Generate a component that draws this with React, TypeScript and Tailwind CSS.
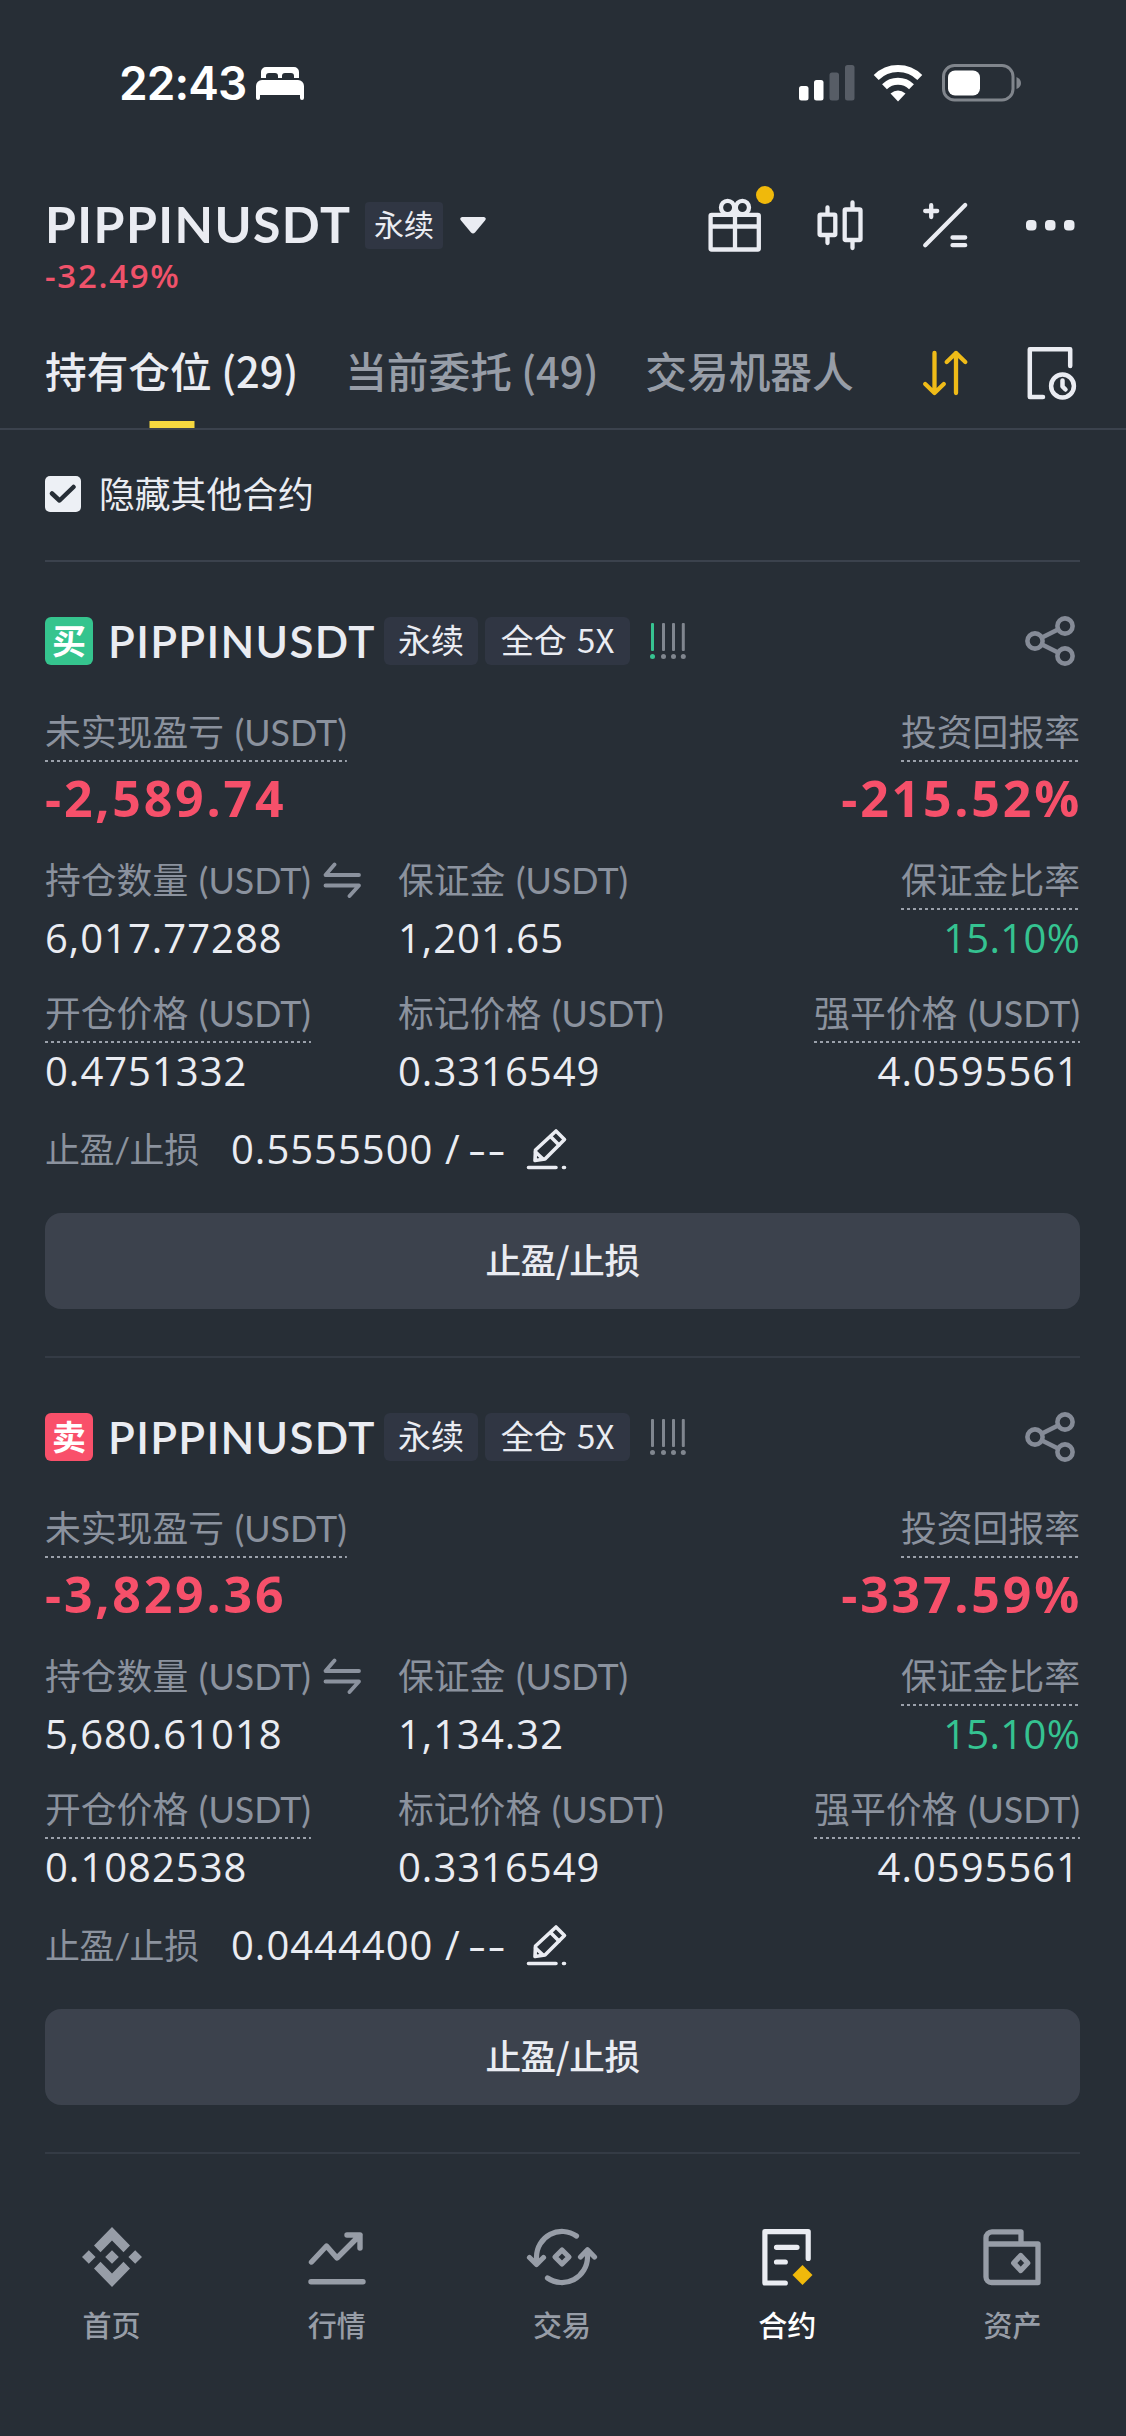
import React, { useState } from "react";

type Position = {
  side: "buy" | "sell";
  symbol: string;
  leverage: string;
  risk: number;
  pnl: string;
  roi: string;
  size: string;
  margin: string;
  marginRatio: string;
  entryPrice: string;
  markPrice: string;
  liqPrice: string;
  tpsl: string;
};

const positions: Position[] = [
  {
    side: "buy",
    symbol: "PIPPINUSDT",
    leverage: "5X",
    risk: 1,
    pnl: "-2,589.74",
    roi: "-215.52%",
    size: "6,017.77288",
    margin: "1,201.65",
    marginRatio: "15.10%",
    entryPrice: "0.4751332",
    markPrice: "0.3316549",
    liqPrice: "4.0595561",
    tpsl: "0.5555500",
  },
  {
    side: "sell",
    symbol: "PIPPINUSDT",
    leverage: "5X",
    risk: 0,
    pnl: "-3,829.36",
    roi: "-337.59%",
    size: "5,680.61018",
    margin: "1,134.32",
    marginRatio: "15.10%",
    entryPrice: "0.1082538",
    markPrice: "0.3316549",
    liqPrice: "4.0595561",
    tpsl: "0.0444400",
  },
];

const StatusBar = () => (
  <div className="flex h-[166px] items-center justify-between pl-[119px] pr-[104px]">
    <div className="flex items-center gap-[10px] text-white">
      <span className="font-['Inter',sans-serif] text-[46px] font-semibold leading-none tracking-[-0.9px]">
        22:43
      </span>
      <svg width="48" height="33" viewBox="0 0 48 33" fill="currentColor">
        <path d="M5 11V5a5 5 0 0 1 5-5h28a5 5 0 0 1 5 5v6h-5V9a3 3 0 0 0-3-3h-6a3 3 0 0 0-3 3v2h-4V9a3 3 0 0 0-3-3h-6a3 3 0 0 0-3 3v2z" />
        <path d="M0 19a6 6 0 0 1 6-6h36a6 6 0 0 1 6 6v12a2 2 0 0 1-4 0v-3H4v3a2 2 0 0 1-4 0z" />
      </svg>
    </div>
    <div className="flex items-center gap-[19px]">
      <svg className="-mr-[1px]" width="56" height="36" viewBox="0 0 56 36">
        <rect x="0" y="21" width="9.5" height="14.5" rx="2.5" fill="#fff" />
        <rect x="15" y="15" width="9.5" height="20.5" rx="2.5" fill="#fff" />
        <rect x="30.5" y="7.5" width="9.5" height="28" rx="2.5" fill="#575d66" />
        <rect x="46" y="0" width="9.5" height="35.5" rx="2.5" fill="#575d66" />
      </svg>
      <svg width="50" height="37" viewBox="0 0 50 37" fill="none">
        <path d="M3.2 12.5A31 31 0 0 1 46.8 12.5" stroke="#fff" strokeWidth="7" />
        <path d="M11.5 21.8A19.5 19.5 0 0 1 38.5 21.8" stroke="#fff" strokeWidth="7" />
        <path d="M25 36.5L17.5 28.5Q25 22.5 32.5 28.5Z" fill="#fff" />
      </svg>
      <svg width="80" height="38" viewBox="0 0 80 38" fill="none">
        <rect x="1.5" y="1.5" width="69.5" height="34.5" rx="11" stroke="#80858c" strokeWidth="3" />
        <rect x="6" y="6.5" width="32" height="25" rx="7" fill="#fff" />
        <path d="M74.5 13Q79 15 79 19T74.5 25Z" fill="#80858c" />
      </svg>
    </div>
  </div>
);

const Header = () => (
  <div className="mt-[29px] flex items-start justify-between pl-[45px] pr-[49px]">
    <div>
      <div className="flex h-[60px] items-center">
        <span className="w-[320px] pb-[2px] font-['Lato','Noto_Sans_CJK_SC',sans-serif] text-[50px] font-bold leading-[58px] tracking-[1.4px]">
          PIPPINUSDT
        </span>
        <span className="flex h-[47px] w-[78px] items-center justify-center rounded-[4px] bg-[#303643] pb-[4px] font-['Noto_Sans_CJK_SC',sans-serif] text-[30px] leading-none">
          永续
        </span>
        <svg className="ml-[17px]" width="26" height="17" viewBox="0 0 26 17" fill="currentColor">
          <path d="M2 0H24Q27 1 25 3.5L15 15.5Q13 17.5 11 15.5L1 3.5Q-1 1 2 0Z" />
        </svg>
      </div>
      <div className="h-[42px] font-['Open_Sans',sans-serif] text-[33px] font-semibold leading-[42px] tracking-[1.7px] text-[#f0526a]">
        -32.49%
      </div>
    </div>
    <div className="flex h-[60px] items-center gap-[51px]">
      <div className="relative">
        <svg width="54" height="54" viewBox="0 0 54 54" fill="none" stroke="currentColor" strokeWidth="4.3">
          <rect x="2.6" y="16.8" width="48.2" height="34.7" rx="1" />
          <path d="M2.6 28.5H50.8M27 9V51" />
          <circle cx="19.6" cy="9.5" r="6.6" />
          <circle cx="34.4" cy="9.5" r="6.6" />
        </svg>
        <span className="absolute -right-[12px] -top-[12px] h-[18px] w-[18px] rounded-full bg-[#f0b90b]" />
      </div>
      <svg width="54" height="54" viewBox="0 0 54 54" fill="none" stroke="currentColor" strokeWidth="4.3" strokeLinecap="round">
        <rect x="6.6" y="16.7" width="15.7" height="20.3" rx="1" />
        <path d="M14.5 9.5V15M14.5 38V45M39.5 4.5V10M39.5 43V50" />
        <rect x="31.7" y="11.5" width="15.8" height="30.5" rx="1" />
      </svg>
      <svg width="54" height="54" viewBox="0 0 54 54" fill="none" stroke="currentColor" strokeWidth="4.3" strokeLinecap="round">
        <path d="M47.2 7L7.2 47.2M13.2 7.2V19M7.2 13H19.2M34.5 39.5H47.2M34.5 47.2H47.2" />
      </svg>
      <svg width="54" height="54" viewBox="0 0 54 54" fill="currentColor">
        <rect x="3" y="22" width="10.5" height="10.5" rx="4" />
        <rect x="22" y="22" width="10.5" height="10.5" rx="4" />
        <rect x="41" y="22" width="10.5" height="10.5" rx="4" />
      </svg>
    </div>
  </div>
);

const tabs = ["持有仓位 (29)", "当前委托 (49)", "交易机器人"];

const Tabs = () => {
  const [active, setActive] = useState(0);

  return (
    <div className="mt-[20px] flex h-[113px] items-center justify-between border-b-2 border-[#3b424d] pl-[45px] pr-[49px]">
      <div className="flex h-full gap-[46.8px]">
        {tabs.map((tab, index) => (
          <button
            key={tab}
            onClick={() => setActive(index)}
            className={`relative h-full whitespace-nowrap pb-[4px] font-['Noto_Sans_CJK_SC',sans-serif] text-[41.7px] font-medium ${
              active === index ? "text-[#eaecf2]" : "text-[#979da7]"
            }`}
          >
            {tab}
            {active === index && (
              <span className="absolute bottom-0 left-1/2 h-[7px] w-[45px] -translate-x-1/2 bg-[#f6d83f]" />
            )}
          </button>
        ))}
      </div>
      <div className="flex items-center gap-[51px]">
        <svg width="54" height="54" viewBox="0 0 54 54" fill="none" stroke="#efbb18" strokeWidth="4.3" strokeLinecap="round" strokeLinejoin="round">
          <path d="M16.5 7V47M7.2 38L16.5 47L25.8 38" />
          <path d="M38 47V7M28.7 16L38 7L47.3 16" />
        </svg>
        <svg width="54" height="54" viewBox="0 0 54 54" fill="none" stroke="currentColor" strokeWidth="4.5" strokeLinecap="round" strokeLinejoin="round">
          <path d="M47.2 20V3.3H6.8V51H20" />
          <circle cx="39.5" cy="40" r="11.4" />
          <path d="M39.5 34.5V40.5L42.5 43.5" />
        </svg>
      </div>
    </div>
  );
};

type FieldProps = {
  label: string;
  value: string;
  dotted?: boolean;
  right?: boolean;
  swap?: boolean;
  valueClass?: string;
};

const Field = ({ label, value, dotted, right, swap, valueClass }: FieldProps) => (
  <div className={`flex flex-col ${right ? "items-end" : "items-start"}`}>
    <div className="flex items-center">
      <div
        className={`h-[56px] whitespace-nowrap font-['Lato','Noto_Sans_CJK_SC',sans-serif] text-[35.8px] leading-[53px] text-[#8b929e] [word-spacing:1.5px] ${
          dotted
            ? "bg-[repeating-linear-gradient(90deg,#9ba1ab_0px,#9ba1ab_3px,transparent_3px,transparent_6px)] bg-[length:100%_2px] bg-bottom bg-no-repeat"
            : ""
        }`}
      >
        {label}
      </div>
      {swap && (
        <svg className="-mt-1 ml-[12px] text-[#8b929e]" width="38" height="36" viewBox="0 0 38 36" fill="none" stroke="currentColor" strokeWidth="3.8" strokeLinecap="round" strokeLinejoin="round">
          <path d="M36 13H2.5L11.5 2.5M2.5 23.5H36L26.5 34" />
        </svg>
      )}
    </div>
    <div className={valueClass || "h-[58px] font-['Open_Sans',sans-serif] text-[40px] leading-[56px] tracking-[1px]"}>
      {value}
    </div>
  </div>
);

const PositionCard = ({ position }: { position: Position }) => {
  const pnlClass =
    "-mr-[2px] h-[72px] font-['Open_Sans',sans-serif] text-[50px] font-bold leading-[72px] tracking-[2.8px] text-[#f6506a]";

  return (
    <div className="border-b-2 border-[#343b45] pb-[47px] pt-[55px]">
      <div className="flex h-[48px] items-center">
        <span
          className={`flex h-[48px] w-[48px] items-center justify-center rounded-[6px] pb-[2px] font-['Noto_Sans_CJK_SC',sans-serif] text-[34px] font-bold leading-none text-white ${
            position.side === "buy" ? "bg-[#35c48e]" : "bg-[#f9506a]"
          }`}
        >
          {position.side === "buy" ? "买" : "卖"}
        </span>
        <span className="ml-[15px] w-[276px] font-['Lato',sans-serif] text-[44px] font-semibold leading-[48px] tracking-[1.3px]">
          {position.symbol}
        </span>
        <span className="flex h-[48px] w-[94px] items-center justify-center rounded-[6px] bg-[#303643] pb-[3px] font-['Noto_Sans_CJK_SC',sans-serif] text-[33px] leading-none">
          永续
        </span>
        <span className="ml-[7px] flex h-[48px] w-[145px] items-center justify-center rounded-[6px] bg-[#303643] pb-[3px] font-['Noto_Sans_CJK_SC',sans-serif] text-[33px] leading-none [word-spacing:3px]">
          全仓 {position.leverage}
        </span>
        <svg className="ml-[20px]" width="36" height="38" viewBox="0 0 36 38">
          {[2.5, 13.5, 23.5, 33.3].map((x, index) => (
            <g key={x} fill={index < position.risk ? "#37c391" : "#80868f"}>
              <rect x={x - 1.5} y="1" width="3" height="28" rx="1" />
              <circle cx={x} cy="34.5" r="2.5" />
            </g>
          ))}
        </svg>
        <svg className="ml-auto text-[#858b97]" width="56" height="52" viewBox="0 0 56 52" fill="none" stroke="currentColor" strokeWidth="4.6">
          <circle cx="41" cy="11" r="7.6" />
          <circle cx="11" cy="26" r="7.6" />
          <circle cx="41" cy="41" r="7.6" />
          <path d="M18 22.5L34 14.5M18 29.5L34 37.5" />
        </svg>
      </div>

      <div className="mt-[41px] flex justify-between">
        <Field label="未实现盈亏 (USDT)" value={position.pnl} dotted valueClass={pnlClass} />
        <Field label="投资回报率" value={position.roi} dotted right valueClass={pnlClass} />
      </div>

      <div className="mt-[20px] grid grid-cols-[353px_1fr_auto] gap-y-[19px]">
        <Field label="持仓数量 (USDT)" value={position.size} swap />
        <Field label="保证金 (USDT)" value={position.margin} />
        <Field
          label="保证金比率"
          value={position.marginRatio}
          dotted
          right
          valueClass="h-[58px] font-['Open_Sans',sans-serif] text-[40px] leading-[56px] tracking-[0.3px] text-[#35c391]"
        />
        <Field label="开仓价格 (USDT)" value={position.entryPrice} dotted />
        <Field label="标记价格 (USDT)" value={position.markPrice} />
        <Field label="强平价格 (USDT)" value={position.liqPrice} dotted right />
      </div>

      <div className="mt-[24px] flex h-[48px] items-center">
        <span className="w-[186px] font-['Lato','Noto_Sans_CJK_SC',sans-serif] text-[35px] leading-[48px] tracking-[-0.4px] text-[#8b929e]">
          止盈/止损
        </span>
        <span className="whitespace-pre font-['Open_Sans',sans-serif] text-[40px] leading-[48px] tracking-[1px]">
          {position.tpsl} /{" "}
          <span className="-ml-[4px] inline-block origin-left scale-x-[1.4]">--</span>
        </span>
        <svg className="ml-[30px]" width="42" height="42" viewBox="0 0 42 42" fill="none" stroke="currentColor" strokeWidth="3.6" strokeLinecap="round" strokeLinejoin="round">
          <path d="M9 32.5L9.5 22L30 3L38.5 11.5L19 31Z" />
          <path d="M24.5 8.5L33 17M9.5 24L17 31M2.5 39.5H30M37.5 39.5H38.5" />
        </svg>
      </div>

      <button className="mt-[40px] h-[96px] w-full rounded-[16px] bg-[#3c424d] pb-[4px] font-['Noto_Sans_CJK_SC',sans-serif] text-[35.6px] font-medium tracking-[-0.4px]">
        止盈/止损
      </button>
    </div>
  );
};

const navItems = [
  {
    label: "首页",
    icon: (
      <svg width="60" height="60" viewBox="0 0 60 60" fill="currentColor">
        <path d="M30 0L48 18.5L41.5 25.2L30 13.5L18.5 25.2L12 18.5ZM30 60L48 41.5L41.5 34.8L30 46.5L18.5 34.8L12 41.5Z" />
        <path d="M30 23.2L36.8 30L30 36.8L23.2 30ZM6.8 23.2L13.6 30L6.8 36.8L0 30ZM53.2 23.2L60 30L53.2 36.8L46.4 30Z" />
      </svg>
    ),
  },
  {
    label: "行情",
    icon: (
      <svg width="60" height="60" viewBox="0 0 60 60" fill="none" stroke="currentColor" strokeWidth="5.4" strokeLinecap="round" strokeLinejoin="round">
        <path d="M4.5 35L19.5 19L30 31L53 8M40 8H53V21M4 54.8H56" />
      </svg>
    ),
  },
  {
    label: "交易",
    icon: (
      <svg width="72" height="60" viewBox="0 0 72 60" fill="none" stroke="currentColor" strokeWidth="5.2" strokeLinecap="round" strokeLinejoin="round">
        <path d="M10.5 37V30A25.5 25.5 0 0 1 50.5 9M3.5 30.5L10.5 37.5L17.5 30.5" />
        <path d="M61.5 23V30A25.5 25.5 0 0 1 21.5 51M54.5 30L61.5 22.8L68.5 30" />
        <path d="M36 23L43 30L36 37L29 30Z" />
      </svg>
    ),
  },
  {
    label: "合约",
    active: true,
    icon: (
      <svg width="60" height="60" viewBox="0 0 60 60" fill="none" stroke="#eaecf2" strokeWidth="5.2" strokeLinecap="round" strokeLinejoin="round">
        <path d="M51.2 31.5V4.6H7.9V56H28.3M19.5 20.3H40M19.5 35H28.3" />
        <path d="M45.5 38L55.5 48L45.5 58L35.5 48Z" fill="#f0b90b" stroke="none" />
      </svg>
    ),
  },
  {
    label: "资产",
    icon: (
      <svg width="60" height="60" viewBox="0 0 60 60" fill="none" stroke="currentColor" strokeWidth="5.3" strokeLinejoin="round">
        <path d="M39 17V4.8H10A6 6 0 0 0 4 10.8V50A5.5 5.5 0 0 0 9.5 55.500H56V17H4" />
        <path d="M38.7 28.5L45.7 36L38.7 43.5L31.7 36Z" />
      </svg>
    ),
  },
];

const BottomNav = () => (
  <div className="-ml-[1px] grid w-[1126px] grid-cols-5 pt-[73px]">
    {navItems.map((item) => (
      <div
        key={item.label}
        className={`flex flex-col items-center font-['Noto_Sans_CJK_SC',sans-serif] ${
          item.active ? "text-white" : "text-[#979da7]"
        }`}
      >
        {item.icon}
        <span className="mt-[17px] text-[29px] font-medium leading-[40px]">{item.label}</span>
      </div>
    ))}
  </div>
);

export default function App() {
  const [hideOthers, setHideOthers] = useState(true);

  return (
    <div className="h-[2436px] w-[1126px] overflow-hidden bg-[#272e36] text-[#eaecf2]">
      <StatusBar />
      <Header />
      <Tabs />
      <div className="pl-[45px] pr-[46px]">
        <div
          className="flex h-[132px] cursor-pointer items-center border-b-2 border-[#3b424d] pb-[2px]"
          onClick={() => setHideOthers(!hideOthers)}
        >
          <span className="flex h-[36px] w-[36px] items-center justify-center rounded-[5px] bg-[#edf0f5]">
            {hideOthers && (
              <svg width="28" height="20" viewBox="0 0 28 20" fill="none" stroke="#272e36" strokeWidth="4.5" strokeLinecap="round" strokeLinejoin="round">
                <path d="M3 9.5L10.5 16.5L24.5 3" />
              </svg>
            )}
          </span>
          <span className="ml-[18px] pb-[3px] font-['Noto_Sans_CJK_SC',sans-serif] text-[35.8px] leading-none">
            隐藏其他合约
          </span>
        </div>
        {positions.map((position) => (
          <PositionCard key={position.side} position={position} />
        ))}
      </div>
      <BottomNav />
    </div>
  );
}
